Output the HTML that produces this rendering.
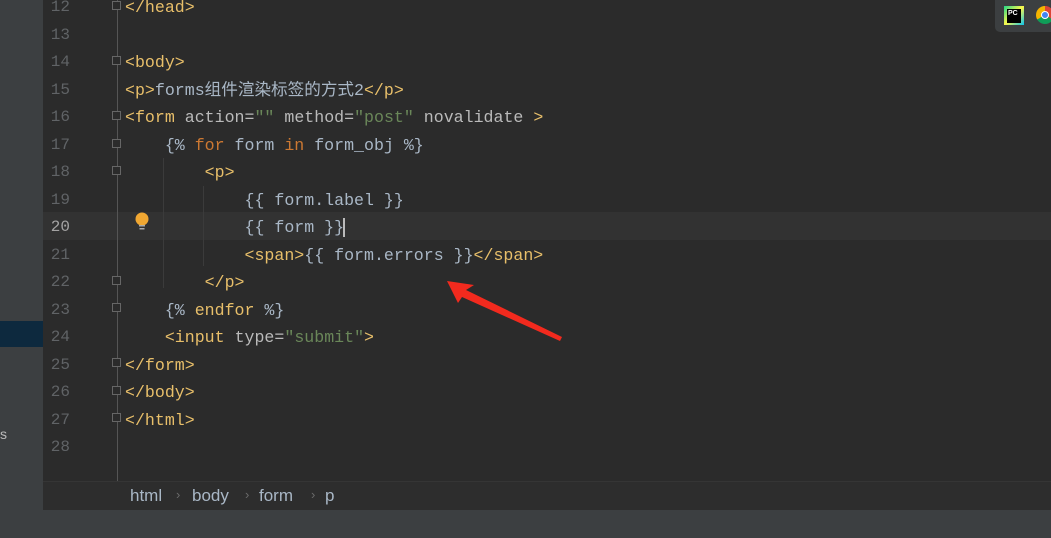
<!DOCTYPE html>
<html><head><meta charset="utf-8"><style>
body{margin:0;width:1051px;height:538px;background:#2b2b2b;overflow:hidden;position:relative;font-family:"Liberation Mono","Noto Sans CJK SC",monospace;}
.left{position:absolute;left:0;top:0;width:43px;height:510px;background:#3c3f41;}
.sel{position:absolute;left:0;top:321px;width:43px;height:26px;background:#0d293e;}
.cur{position:absolute;left:43px;top:212px;width:1008px;height:28px;background:#323232;}
.code{position:absolute;left:0;top:-6px;font-size:16.6px;line-height:27.5px;white-space:pre;color:#a9b7c6;}
.ln{position:absolute;left:43px;top:-6px;width:27px;text-align:right;font-size:16px;line-height:27.5px;color:#606366;white-space:pre;}
.t{color:#e8bf6a}.a{color:#bababa}.s{color:#6a8759}.k{color:#cc7832}
.fold{position:absolute;left:117px;width:1px;background:#555;}
.guide{position:absolute;width:1px;background:#3b3b3b;}
.mk{position:absolute;left:112px;width:9px;height:9px;border:1px solid #666;box-sizing:border-box;background:#2b2b2b;}
.bar{position:absolute;left:43px;top:481px;width:1008px;height:29px;background:#2d2d2d;border-top:1px solid #353535;font-family:"Liberation Sans",sans-serif;font-size:17px;color:#a9b7c6;}
.bar span{position:absolute;top:4px}
.bar i{position:absolute;top:5px;color:#6a6a6a;font-style:normal;font-size:13px}
.status{position:absolute;left:0;top:510px;width:1051px;height:28px;background:#3c3f41;}
.pop{position:absolute;left:995px;top:0;width:56px;height:32px;background:#3c3f41;border-radius:0 0 0 5px;}
</style></head><body>
<div class="left"><div class="sel"></div><div style="position:absolute;left:0;top:426px;color:#bbb;font-family:'Liberation Sans',sans-serif;font-size:14px">s</div></div>
<div class="cur"></div>
<div class="fold" style="top:0;height:481px"></div>
<div class="guide" style="left:163px;top:158px;height:130px"></div>
<div class="guide" style="left:203px;top:186px;height:80px"></div>
<div class="mk" style="top:1px"></div><div class="mk" style="top:56px"></div><div class="mk" style="top:111px"></div><div class="mk" style="top:139px"></div><div class="mk" style="top:166px"></div><div class="mk" style="top:276px"></div><div class="mk" style="top:303px"></div><div class="mk" style="top:358px"></div><div class="mk" style="top:386px"></div><div class="mk" style="top:413px"></div>
<div class="ln">12
13
14
15
16
17
18
19
<span style="color:#a4a3a3">20</span>
21
22
23
24
25
26
27
28</div>
<div class="code" style="left:125px"><span class="t">&lt;/head&gt;</span>

<span class="t">&lt;body&gt;</span>
<span class="t">&lt;p&gt;</span>forms组件渲染标签的方式2<span class="t">&lt;/p&gt;</span>
<span class="t">&lt;form </span><span class="a">action=</span><span class="s">""</span> <span class="a">method=</span><span class="s">"post"</span> <span class="a">novalidate</span> <span class="t">&gt;</span>
    {% <span class="k">for</span> form <span class="k">in</span> form_obj %}
        <span class="t">&lt;p&gt;</span>
            {{ form.label }}
            {{ form }}<span style="border-left:2px solid #bbb;margin-left:-1px"></span>
            <span class="t">&lt;span&gt;</span>{{ form.errors }}<span class="t">&lt;/span&gt;</span>
        <span class="t">&lt;/p&gt;</span>
    {% <span class="t">endfor</span> %}
    <span class="t">&lt;input </span><span class="a">type=</span><span class="s">"submit"</span><span class="t">&gt;</span>
<span class="t">&lt;/form&gt;</span>
<span class="t">&lt;/body&gt;</span>
<span class="t">&lt;/html&gt;</span>
</div>
<svg style="position:absolute;left:134px;top:212px" width="16" height="22"><circle cx="8" cy="7" r="6.5" fill="#f0a732"/><rect x="5" y="13" width="6" height="1.5" fill="#aaa"/><rect x="5.5" y="16" width="5" height="1.5" fill="#aaa"/></svg>
<svg style="position:absolute;left:0;top:0" width="1051" height="538"><polygon points="447,281 474,285 466,290 562,337 560,341 462,297 458,303" fill="#f22a1e"/></svg>
<div class="bar"><span style="left:87px">html</span><i style="left:133px">›</i><span style="left:149px">body</span><i style="left:202px">›</i><span style="left:216px">form</span><i style="left:268px">›</i><span style="left:282px">p</span></div>
<div class="status"></div>
<div class="pop"><div style="position:absolute;left:9px;top:6px;width:20px;height:19px;background:linear-gradient(135deg,#21d789,#fcf84a,#07c3f2);"><div style="position:absolute;left:3px;top:3px;width:14px;height:14px;background:#000;color:#fff;font:bold 7px 'Liberation Sans',sans-serif;line-height:9px;padding-left:1px;box-sizing:border-box">PC</div></div><div style="position:absolute;left:41px;top:6px;width:18px;height:18px;border-radius:50%;background:conic-gradient(#db4437 0 120deg,#0f9d58 120deg 240deg,#f4b400 240deg)"><div style="position:absolute;left:5px;top:5px;width:8px;height:8px;border-radius:50%;background:#4285f4;border:1px solid #fff;box-sizing:border-box"></div></div></div>
</body></html>
